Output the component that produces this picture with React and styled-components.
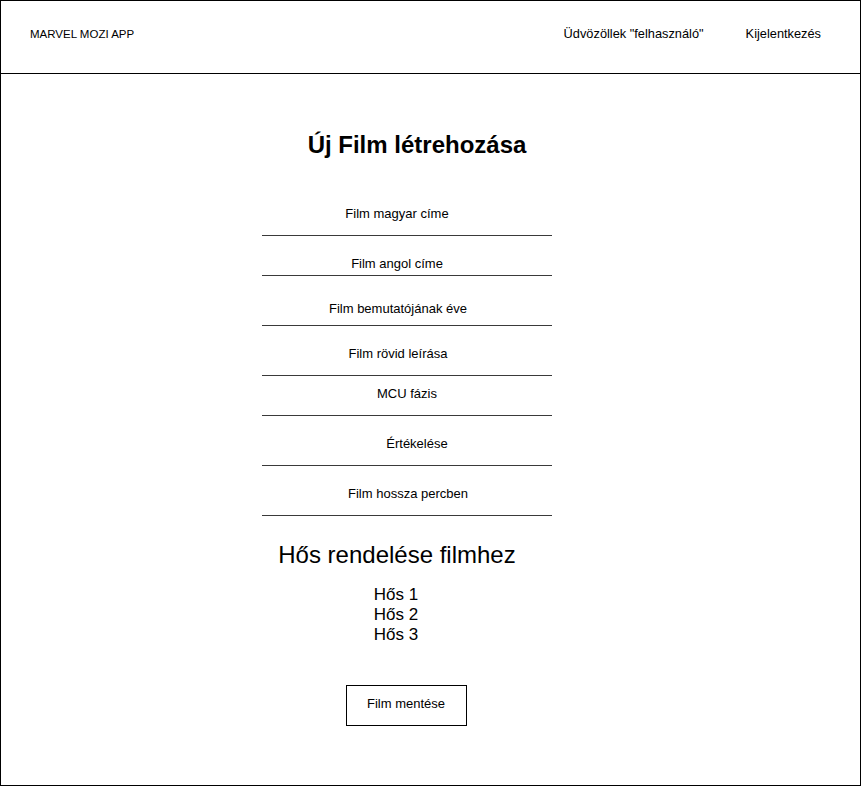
import React from "react";
import styled, { createGlobalStyle } from "styled-components";

const GlobalStyle = createGlobalStyle`
  html, body {
    margin: 0;
    padding: 0;
    background: #fff;
  }
  body {
    font-family: "Liberation Sans", Arial, sans-serif;
    color: #000;
  }
`;

const fields = [
  { label: "Film magyar címe", height: 40, gap: 22, shift: -10 },
  { label: "Film angol címe", height: 40, gap: 12, shift: -10 },
  { label: "Film bemutatójának éve", height: 50, gap: 17, shift: -9 },
  { label: "Film rövid leírása", height: 50, gap: 22, shift: -9 },
  { label: "MCU fázis", height: 40, gap: 22, shift: 0 },
  { label: "Értékelése", height: 50, gap: 22, shift: 10 },
  { label: "Film hossza percben", height: 50, gap: 22, shift: 1 },
];

const heroes = ["Hős 1", "Hős 2", "Hős 3"];

const shiftPadding = (p) =>
  `0 ${p.$shift < 0 ? -2 * p.$shift : 0}px 0 ${p.$shift > 0 ? 2 * p.$shift : 0}px`;

function App() {
  return (
    <>
      <GlobalStyle />
      <Frame>
        <Header>
          <Brand>MARVEL MOZI APP</Brand>
          <Nav>
            <NavItem>Üdvözöllek "felhasználó"</NavItem>
            <NavItem>Kijelentkezés</NavItem>
          </Nav>
        </Header>
        <Main>
          <Column>
            <Title $shift={10}>Új Film létrehozása</Title>
            <Form>
              {fields.map((f) => (
                <Field key={f.label} $height={f.height} $gap={f.gap}>
                  <Label $shift={f.shift}>{f.label}</Label>
                </Field>
              ))}
            </Form>
            <SubTitle $shift={-10}>Hős rendelése filmhez</SubTitle>
            <HeroList $shift={-11}>
              {heroes.map((h) => (
                <Hero key={h}>{h}</Hero>
              ))}
            </HeroList>
            <SaveButton type="button">Film mentése</SaveButton>
          </Column>
        </Main>
      </Frame>
    </>
  );
}

const Frame = styled.div`
  box-sizing: border-box;
  width: 861px;
  height: 786px;
  border: 1px solid #000;
  display: flex;
  flex-direction: column;
`;

const Header = styled.header`
  box-sizing: border-box;
  height: 73px;
  border-bottom: 1px solid #000;
  display: flex;
  justify-content: space-between;
  align-items: flex-start;
  padding: 26px 39px 0 29px;
`;

const Brand = styled.div`
  font-size: 11.5px;
  line-height: 14px;
`;

const Nav = styled.nav`
  display: flex;
  gap: 42px;
`;

const NavItem = styled.span`
  font-size: 12.8px;
  line-height: 14px;
`;

const Main = styled.main`
  flex: 1;
  padding-left: 261px;
`;

const Column = styled.div`
  width: 290px;
  display: flex;
  flex-direction: column;
  align-items: center;
`;

const Title = styled.h1`
  margin: 57px 0 0;
  padding: ${shiftPadding};
  font-size: 24px;
  line-height: 28px;
  font-weight: bold;
  white-space: nowrap;
`;

const Form = styled.div`
  margin-top: 37px;
  width: 100%;
`;

const Field = styled.div`
  box-sizing: border-box;
  height: ${(p) => p.$height}px;
  border-bottom: 1px solid #3a3a3a;
  display: flex;
  flex-direction: column;
  justify-content: flex-end;
  padding-bottom: ${(p) => p.$gap - 8}px;
`;

const Label = styled.div`
  font-size: 13px;
  line-height: 15px;
  text-align: center;
  padding: ${shiftPadding};
`;

const SubTitle = styled.h2`
  margin: 25px 0 0;
  padding: ${shiftPadding};
  font-size: 24px;
  line-height: 28px;
  font-weight: normal;
  white-space: nowrap;
`;

const HeroList = styled.ul`
  list-style: none;
  margin: 16px 0 0;
  padding: ${shiftPadding};
`;

const Hero = styled.li`
  font-size: 17px;
  line-height: 20px;
`;

const SaveButton = styled.button`
  box-sizing: border-box;
  margin: 40px 2px 0 0;
  width: 121px;
  height: 41px;
  border: 1px solid #000;
  background: #fff;
  padding: 0 0 4px;
  font-family: "Liberation Sans", Arial, sans-serif;
  font-size: 13px;
  color: #000;
  cursor: pointer;
`;

export default App;
